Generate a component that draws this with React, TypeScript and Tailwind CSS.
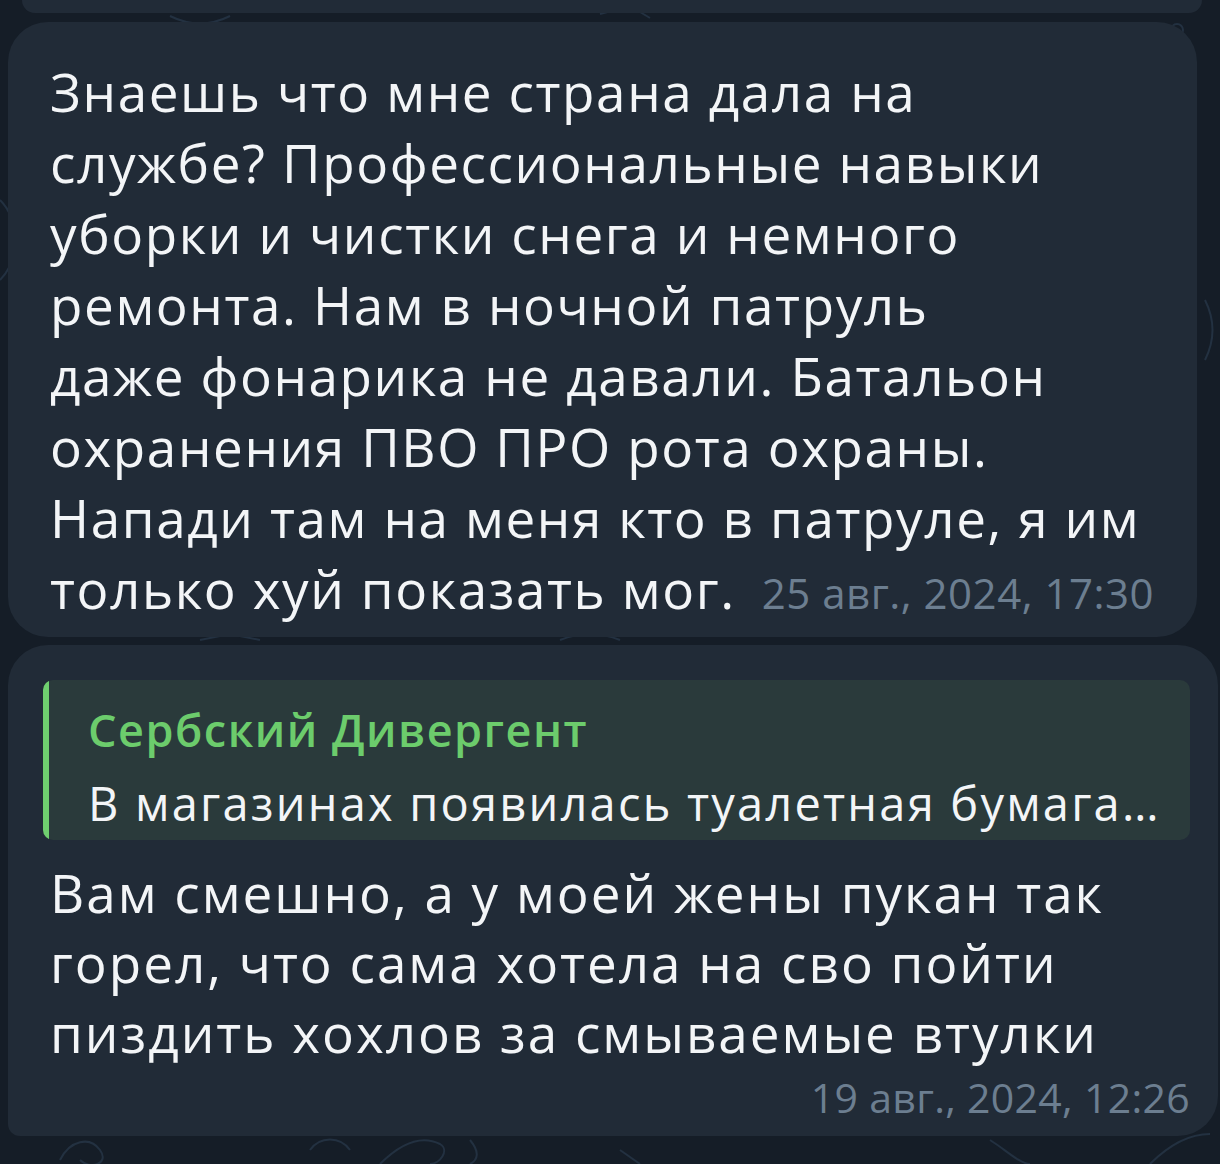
import type { FC } from "react";

const font = { fontFamily: '"Open Sans", "Noto Sans", sans-serif' };

const firstLines = [
  "Знаешь что мне страна дала на",
  "службе? Профессиональные навыки",
  "уборки и чистки снега и немного",
  "ремонта. Нам в ночной патруль",
  "даже фонарика не давали. Батальон",
  "охранения ПВО ПРО рота охраны.",
  "Напади там на меня кто в патруле, я им",
];

const secondLines = [
  "Вам смешно, а у моей жены пукан так",
  "горел, что сама хотела на сво пойти",
  "пиздить хохлов за смываемые втулки",
];

const Doodles: FC = () => (
  <svg className="absolute inset-0 h-full w-full" viewBox="0 0 1220 1164" fill="none" stroke="#233141" strokeWidth="2">
    <circle cx="60" cy="50" r="8" />
    <path d="M170 16c20 10 40 10 60 0" />
    <path d="M600 14l30 -8 20 12" />
    <circle cx="1177" cy="30" r="6" />
    <path d="M0 200c20 20 20 60 0 80" />
    <path d="M1205 300c10 20 10 40 0 60" />
    <path d="M200 640l30 -6 30 6" />
    <path d="M560 640c20 -8 40 -8 60 0" />
    <path d="M60 1160c10 -20 30 -24 40 -10 10 14 -10 20 -20 10" />
    <path d="M310 1150c10 -14 30 -14 40 0" />
    <path d="M380 1164c20 -20 40 -30 60 -20 10 6 0 20 -10 20" />
    <path d="M470 1140c10 12 8 20 0 24" />
    <path d="M620 1150l20 14" />
    <path d="M990 1140c16 10 30 24 40 24" />
    <path d="M1150 1164c20 -20 40 -30 60 -30" />
  </svg>
);

const App: FC = () => {
  return (
    <div className="relative h-[1164px] w-[1220px] overflow-hidden bg-[#151d27]" style={font}>
      <Doodles />
      <div className="relative flex flex-col">
        <div className="ml-[22px] h-[13px] w-[1180px] rounded-b-[36px] bg-[#212b37]" />

        <div className="ml-[8px] mt-[9px] w-[1189px] rounded-[40px] bg-[#212b37] pb-[9px] pl-[42px] pr-[30px] pt-[34px] text-[53px] leading-[71px] tracking-[1.6px] text-[#f3f5f7]">
          {firstLines.map((line, i) => (
            // biome-ignore lint/suspicious/noArrayIndexKey: static lines
            <p key={i} className="whitespace-nowrap">{line}</p>
          ))}
          <p className="whitespace-nowrap">
            только хуй показать мог.
            <span className="ml-[26px] text-[42px] tracking-[0.5px] text-[#6c7e90]">25 авг., 2024, 17:30</span>
          </p>
        </div>

        <div className="ml-[8px] mt-[8px] w-[1210px] rounded-t-[40px] rounded-bl-[12px] rounded-br-[40px] bg-[#212b37] pb-[14px] pl-[35px] pr-[28px] pt-[35px]">
          <div className="flex overflow-hidden rounded-[10px] bg-[#2a3a3b]">
            <div className="w-[6px] bg-[#6fcf6f]" />
            <div className="pb-[2px] pl-[39px] pt-[12px]">
              <p className="text-[45px] font-semibold leading-[76px] tracking-[1.5px] text-[#6ccc6c]">Сербский Дивергент</p>
              <p className="whitespace-nowrap text-[47px] leading-[70px] tracking-[2.2px] text-[#f3f5f7]">В магазинах появилась туалетная бумага…</p>
            </div>
          </div>
          <div className="pl-[7px] pt-[18px] text-[53px] leading-[70px] tracking-[2px] text-[#f3f5f7]">
            {secondLines.map((line, i) => (
              // biome-ignore lint/suspicious/noArrayIndexKey: static lines
              <p key={i} className="whitespace-nowrap">{line}</p>
            ))}
          </div>
          <p className="mt-[4px] text-right text-[41px] leading-[50px] tracking-[0.3px] text-[#6c7e90]">19 авг., 2024, 12:26</p>
        </div>
      </div>
    </div>
  );
};

export default App;
